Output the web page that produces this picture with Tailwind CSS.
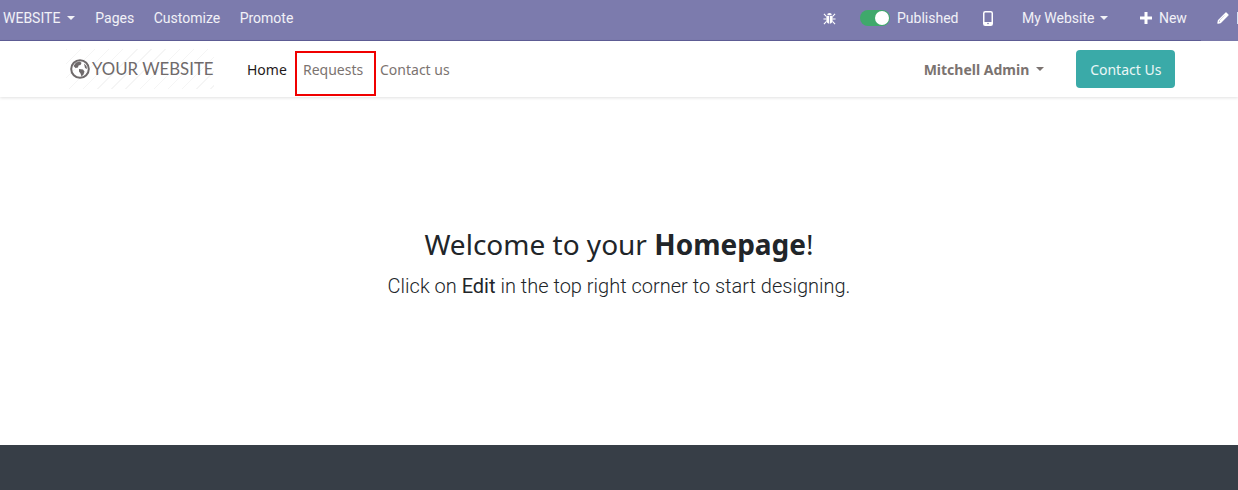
<!DOCTYPE html>
<html lang="en">
<head>
    <meta charset="UTF-8">
    <title>Homepage | My Website</title>
    <script src="https://cdn.jsdelivr.net/npm/@tailwindcss/browser@4"></script>
</head>
<body class="bg-white font-['Roboto',sans-serif] w-[1238px] h-[490px] overflow-hidden flex flex-col">
    <!-- Admin bar -->
    <header class="h-[40px] shrink-0 bg-[#7c7bad] flex items-center pb-[4px] text-[14px] text-white/90 overflow-hidden">
        <div class="w-[823px] shrink-0 flex items-center pl-[3px]">
            <span>WEBSITE</span>
            <span class="ml-[7px] border-x-[4px] border-x-transparent border-t-[4px] border-t-white/90"></span>
            <span class="ml-[20px]">Pages</span>
            <span class="ml-[19.500px]">Customize</span>
            <span class="ml-[19.500px]">Promote</span>
        </div>
        <div class="flex items-center shrink-0">
            <svg class="w-[13px] h-[13px]" viewBox="0 0 14 14" fill="#fff">
                <path d="M4.500 3.600a2.500 2.500 0 0 1 5 0z"/>
                <path d="M3.600 4.400h3v8.200a3.600 3.600 0 0 1-3-3.600zM7.400 4.400h3V9a3.600 3.600 0 0 1-3 3.600z"/>
                <path d="M1 2l2.600 2.600M13 2l-2.600 2.600M.5 7.500h3M13.500 7.500h-3M1 13l2.800-2.800M13 13l-2.800-2.800" stroke="#fff" stroke-width="1.200" fill="none"/>
            </svg>
            <span class="ml-[24px] w-[30px] h-[16px] rounded-full bg-[#3fa96b] relative">
                <span class="absolute right-[1px] top-[1px] w-[14px] h-[14px] rounded-full bg-white"></span>
            </span>
            <span class="ml-[7px]">Published</span>
            <svg class="ml-[25px] w-[10px] h-[15px]" viewBox="0 0 10 15" fill="none">
                <rect x=".75" y=".75" width="8.500" height="13.500" rx="1.500" stroke="#fff" stroke-width="1.500"/>
                <rect x="1" y="11" width="8" height="3" fill="#fff"/>
                <circle cx="5" cy="12.500" r=".8" fill="#7c7bad"/>
            </svg>
            <span class="ml-[28.500px]">My Website</span>
            <span class="ml-[6px] border-x-[4px] border-x-transparent border-t-[4px] border-t-white/90"></span>
            <svg class="ml-[31.500px] w-[12px] h-[12px]" viewBox="0 0 12 12" fill="#fff">
                <path d="M4.500 0h3v4.500H12v3H7.500V12h-3V7.500H0v-3h4.500z"/>
            </svg>
            <span class="ml-[7px]">New</span>
            <svg class="ml-[30px] w-[12px] h-[12px]" viewBox="0 0 12 12" fill="none">
                <path d="M9 1l2 2-7.500 7.500L1 11l.5-2.500z" stroke="#fff" stroke-width="1.300" stroke-linejoin="round"/>
                <path d="M9 1l2 2-2 2-2-2zM7.500 3.500L9 5 3.500 10.500 2 9z" fill="#fff"/>
            </svg>
            <span class="ml-[8px] w-[4px] h-[12px] bg-[#d5e3f5]"></span>
        </div>
    </header>
    <div class="h-px shrink-0 bg-[#7c7bad]"><div class="w-[1201px] h-px bg-[#5f5e97]"></div></div>

    <!-- Site navbar -->
    <nav class="h-[56px] shrink-0 bg-white shadow-[0_1px_3px_rgba(0,0,0,0.12)] flex items-center pl-[66px] font-['Noto_Sans',sans-serif] text-[14px] text-[#7b7370] relative">
        <a class="w-[148px] h-[40px] shrink-0 flex items-center pl-[4px] bg-[repeating-linear-gradient(135deg,#f5f5f5_0,#f5f5f5_1px,#ffffff_1px,#ffffff_10px)]">
            <svg class="w-[20px] h-[20px] shrink-0" viewBox="0 0 20 20">
                <circle cx="10" cy="10" r="8.800" fill="none" stroke="#6f6a6b" stroke-width="2"/>
                <path d="M6 3.500l4-1 1.500 1.500-1 2-2 .5-.5 2-2.500.5L3.500 7zM9 10l4 .5 1.500 2-1 3-2 2-1-3-1.500-2zM14 4.500l2.500 2.500.5 3-2-1z" fill="#6f6a6b"/>
            </svg>
            <span class="ml-[2px] font-['Lato',sans-serif] text-[16.800px] text-[#6f6a6b] whitespace-nowrap">YOUR WEBSITE</span>
        </a>
        <a class="ml-[33px] text-[#1f1a1a] w-[48px]">Home</a>
        <a class="w-[81px] h-[45px] shrink-0 border-2 border-[#f00000] flex items-center pl-[6px] pb-[8px] mt-[9px]">Requests</a>
        <a class="ml-[4px]">Contact us</a>
        <a class="ml-[474px] font-bold whitespace-nowrap">Mitchell Admin</a>
        <span class="ml-[7px] border-x-[4px] border-x-transparent border-t-[4px] border-t-[#7b7370]"></span>
        <a class="ml-[32px] w-[99px] h-[38px] shrink-0 rounded-[4px] bg-[#3aaaa8] text-white/90 flex items-center justify-center">Contact Us</a>
    </nav>

    <!-- Page content -->
    <main class="flex-1 flex flex-col items-center text-[#212529]">
        <h1 class="mt-[127px] font-['Noto_Sans',sans-serif] text-[28px] leading-[40px]">Welcome to your <b>Homepage</b>!</h1>
        <p class="mt-[7px] text-[20px] leading-[30px] font-light">Click on <span class="font-normal">Edit</span> in the top right corner to start designing.</p>
    </main>

    <footer class="h-[45px] shrink-0 bg-[#373e47]"></footer>
</body>
</html>
